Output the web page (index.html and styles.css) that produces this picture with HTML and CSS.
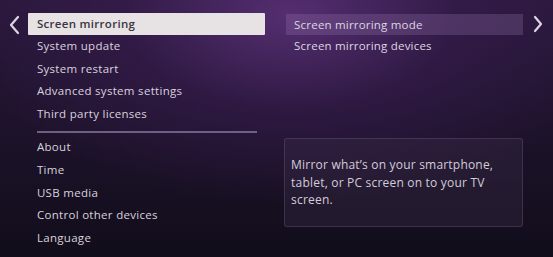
FILE: index.html
```html
<!DOCTYPE html>
<html>
<head>
<meta charset="utf-8">
<link rel="stylesheet" href="styles.css">
</head>
<body>
<div class="screen">
  <div class="nav nav-left">
    <svg width="12" height="20" viewBox="0 0 12 20"><path d="M10 2 L3 10 L10 18" fill="none" stroke="#dcd6e0" stroke-width="2.2" stroke-linecap="round" stroke-linejoin="round"/></svg>
  </div>
  <div class="menu">
    <div class="item selected">Screen mirroring</div>
    <div class="item">System update</div>
    <div class="item">System restart</div>
    <div class="item">Advanced system settings</div>
    <div class="item">Third party licenses</div>
    <div class="divider"></div>
    <div class="item">About</div>
    <div class="item">Time</div>
    <div class="item">USB media</div>
    <div class="item">Control other devices</div>
    <div class="item">Language</div>
  </div>
  <div class="panel">
    <div class="sub focused">Screen mirroring mode</div>
    <div class="sub">Screen mirroring devices</div>
    <div class="desc">
      <p>Mirror what’s on your smartphone, tablet, or PC screen on to your TV screen.</p>
    </div>
  </div>
  <div class="nav nav-right">
    <svg width="12" height="20" viewBox="0 0 12 20"><path d="M3 3 L9 10 L3 17" fill="none" stroke="#dcd6e0" stroke-width="2.2" stroke-linecap="round" stroke-linejoin="round"/></svg>
  </div>
</div>
</body>
</html>
```

FILE: styles.css
```css
html, body {
  margin: 0;
  padding: 0;
}
body {
  width: 553px;
  height: 257px;
  overflow: hidden;
  font-family: "Open Sans", "Liberation Sans", sans-serif;
}
.screen {
  width: 553px;
  height: 257px;
  display: flex;
  background:
    radial-gradient(ellipse 330px 190px at 290px 15px, rgba(92, 50, 122, 0.85), rgba(60, 30, 85, 0.5) 50%, rgba(20, 14, 32, 0) 100%),
    linear-gradient(180deg, #2a183b 0%, #1c1229 55%, #110d1a 100%);
}
.nav {
  width: 28px;
  display: flex;
  justify-content: center;
  padding-top: 15px;
  box-sizing: border-box;
}
.nav-left {
  width: 28px;
  padding-left: 0;
}
.nav-right {
  width: 30px;
  padding-top: 14px;
  padding-left: 0;
}
.menu {
  width: 238px;
  padding-top: 13px;
  box-sizing: border-box;
  display: flex;
  flex-direction: column;
}
.item {
  height: 22.6px;
  line-height: 22.6px;
  padding-left: 9px;
  font-size: 11.5px;
  color: #d9d2de;
  letter-spacing: 0.3px;
  white-space: nowrap;
}
.item.selected {
  height: 22px;
  line-height: 22px;
  background: #e7e3e4;
  color: #3b3342;
  font-weight: 600;
  border-radius: 1px;
}
.divider {
  height: 2px;
  margin: 6px 8px 3px 9px;
  background: #6e5f84;
}
.panel {
  width: 237px;
  margin-left: 21px;
  padding-top: 14px;
  box-sizing: border-box;
  display: flex;
  flex-direction: column;
}
.sub {
  height: 22px;
  line-height: 22px;
  padding-left: 8px;
  font-size: 11.5px;
  color: #ddd6e2;
  letter-spacing: 0.2px;
  white-space: nowrap;
}
.sub.focused {
  height: 21px;
  line-height: 21px;
  background: rgba(150, 120, 175, 0.28);
}
.desc {
  margin-top: 81px;
  margin-left: -2px;
  width: 239px;
  height: 89px;
  box-sizing: border-box;
  border: 1px solid rgba(150, 135, 170, 0.22);
  border-radius: 3px;
  background: rgba(60, 45, 75, 0.35);
  display: flex;
  align-items: center;
  padding: 0 22px 0 6px;
}
.desc p {
  margin: 0;
  font-size: 12px;
  line-height: 17.5px;
  letter-spacing: 0.2px;
  color: #d3ccd8;
}
```
